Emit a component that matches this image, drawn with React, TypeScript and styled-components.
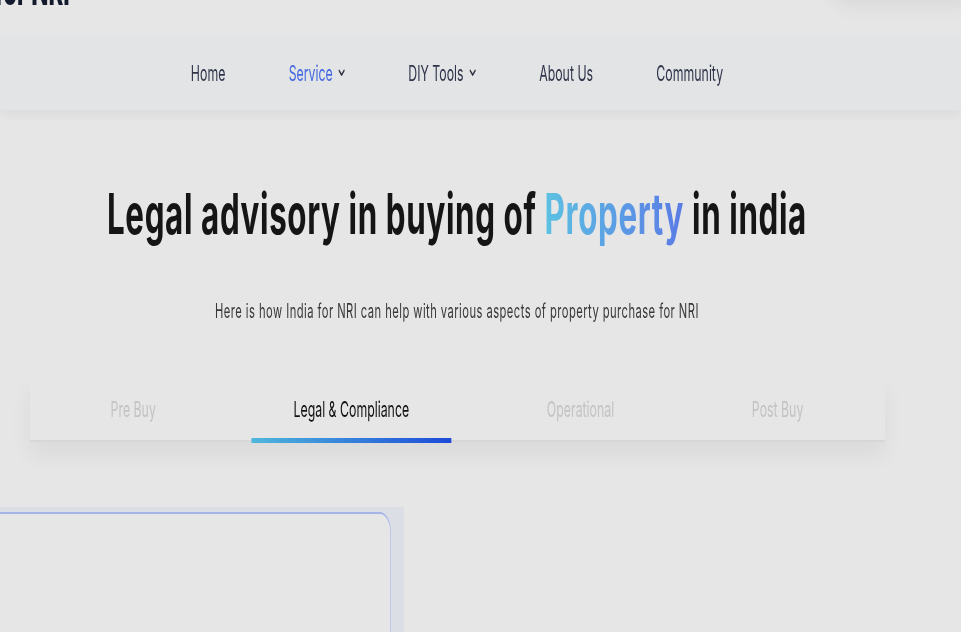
import React from 'react';
import styled, { createGlobalStyle } from 'styled-components';

// the reference is a wide page squeezed into 961px, so the page is laid out
// at its original width and scaled horizontally as a whole
const SQUEEZE = 0.56;

const GlobalStyle = createGlobalStyle`
  html, body {
    margin: 0;
    padding: 0;
    background: #e6e6e6;
    overflow: hidden;
  }
  body {
    font-family: Inter, 'Noto Sans', sans-serif;
  }
`;

const Stage = styled.div`
  width: 1716px;
  transform: scaleX(${SQUEEZE});
  transform-origin: 0 0;
  color: #161616;
`;

const Header = styled.header`
  height: 36px;
  display: flex;
  justify-content: space-between;
  align-items: flex-start;
`;

const Logo = styled.div`
  margin: -29px 0 0 -116px;
  font-size: 40px;
  line-height: 40px;
  font-weight: 800;
  color: #131a2e;
  white-space: nowrap;
`;

const LoginGhost = styled.div`
  width: 260px;
  height: 48px;
  margin: -58px -30px 0 0;
  border-radius: 24px;
  background: #e6e6e6;
  box-shadow: 0 14px 30px rgba(0, 0, 0, 0.07);
`;

const NavBar = styled.nav`
  height: 74px;
  padding-right: 84px;
  background: #e3e4e6;
  box-shadow: 0 6px 12px rgba(0, 0, 0, 0.04);
  display: flex;
  align-items: center;
  justify-content: center;
  gap: 113px;
`;

const NavItem = styled.a<{ active?: boolean }>`
  display: flex;
  align-items: center;
  gap: 10px;
  font-size: 22px;
  line-height: 28px;
  color: ${(p) => (p.active ? '#4469e0' : '#30354a')};
  text-decoration: none;
  svg {
    color: #2d3142;
  }
`;

const Hero = styled.section`
  display: flex;
  flex-direction: column;
  align-items: center;
  padding: 71px 84px 0 0;
`;

const Title = styled.h1`
  margin: 0;
  font-size: 56px;
  line-height: 67px;
  font-weight: 700;
  letter-spacing: 1.1px;
  color: #151515;
  white-space: nowrap;
`;

const Accent = styled.span`
  background: linear-gradient(90deg, #5cc1e2, #5a7be6);
  -webkit-background-clip: text;
  background-clip: text;
  color: transparent;
`;

const Subtitle = styled.p`
  margin: 49px 0 0;
  font-size: 20px;
  line-height: 28px;
  letter-spacing: 0.8px;
  color: #383838;
  white-space: nowrap;
`;

const Tabs = styled.div`
  width: 1527px;
  margin-top: 50px;
  padding: 0 70px;
  box-sizing: border-box;
  display: flex;
  justify-content: space-between;
  border-bottom: 2px solid #d7d7d7;
  box-shadow: 0 14px 30px rgba(0, 0, 0, 0.05);
`;

const Tab = styled.div<{ active?: boolean }>`
  position: relative;
  padding: 22px 75px 19px;
  font-size: 22px;
  line-height: 24px;
  color: ${(p) => (p.active ? '#111111' : '#c3c3c3')};
  white-space: nowrap;
  &::after {
    content: '';
    display: ${(p) => (p.active ? 'block' : 'none')};
    position: absolute;
    left: 0;
    right: 0;
    bottom: -3px;
    height: 5px;
    background: linear-gradient(90deg, #4fb6dc, #1d4bd9);
  }
`;

const Cards = styled.section`
  width: 763px;
  height: 200px;
  margin: 65px 0 0 -42px;
  padding: 5px 23px 0 0;
  box-sizing: border-box;
  background: #dcdee6;
`;

const Card = styled.div`
  height: 240px;
  border: 1.5px solid #a6b5e8;
  border-top-width: 2.5px;
  border-radius: 20px;
  background: #e6e6e6;
`;

const Chevron = () => (
  <svg width="12" height="8" viewBox="0 0 12 8" fill="none">
    <polyline points="1.5,1.5 6,6 10.5,1.5" stroke="currentColor" strokeWidth="2" strokeLinecap="round" strokeLinejoin="round" />
  </svg>
);

const navLinks = [
  { label: 'Home' },
  { label: 'Service', menu: true, active: true },
  { label: 'DIY Tools', menu: true },
  { label: 'About Us' },
  { label: 'Community' }
];

const tabs = ['Pre Buy', 'Legal & Compliance', 'Operational', 'Post Buy'];

export default function App() {
  return (
    <>
      <GlobalStyle />
      <Stage>
        <Header>
          <Logo>India for NRI</Logo>
          <LoginGhost />
        </Header>
        <NavBar>
          {navLinks.map((l) => (
            <NavItem key={l.label} active={l.active}>
              {l.label}
              {l.menu && <Chevron />}
            </NavItem>
          ))}
        </NavBar>
        <Hero>
          <Title>
            Legal advisory in buying of <Accent>Property</Accent> in india
          </Title>
          <Subtitle>
            Here is how India for NRI can help with various aspects of property purchase for NRI
          </Subtitle>
          <Tabs>
            {tabs.map((t) => (
              <Tab key={t} active={t === 'Legal & Compliance'}>
                {t}
              </Tab>
            ))}
          </Tabs>
        </Hero>
        <Cards>
          <Card />
        </Cards>
      </Stage>
    </>
  );
}
